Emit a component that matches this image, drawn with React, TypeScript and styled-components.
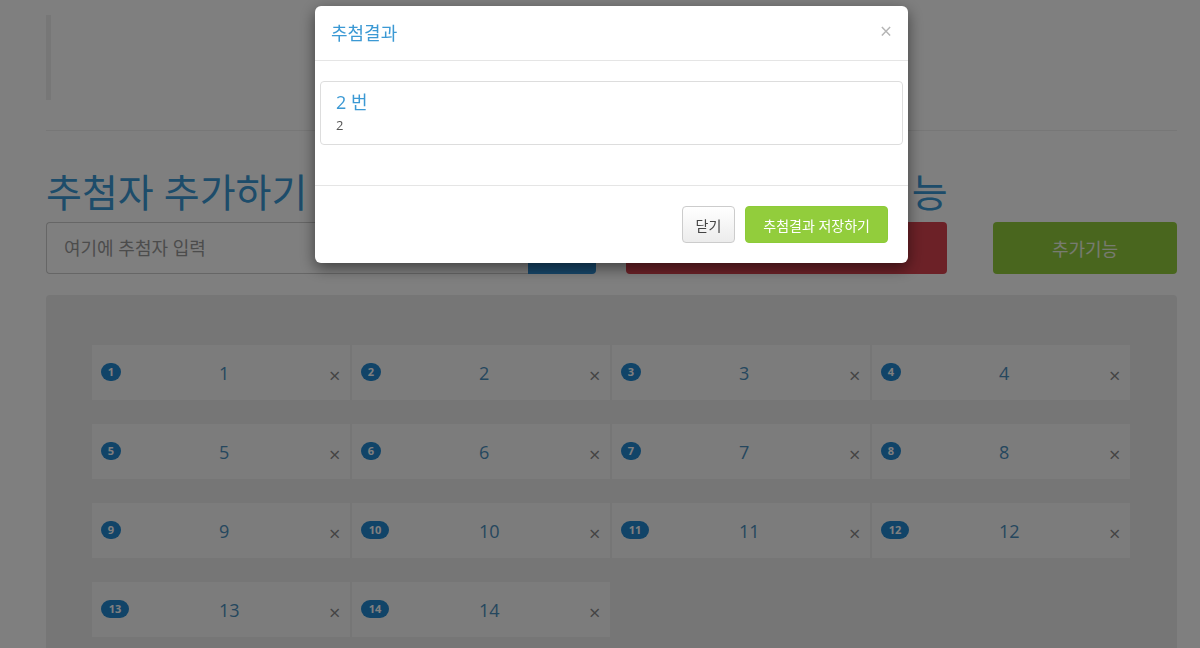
import * as React from 'react'
import styled, { createGlobalStyle } from 'styled-components'

const FONT = `"Open Sans", "Noto Sans CJK KR", sans-serif`

const GlobalStyle = createGlobalStyle`
	html, body {
		margin: 0;
		padding: 0;
		background: #fff;
		font-family: ${FONT};
		overflow: hidden;
	}
	* {
		box-sizing: border-box;
	}
`

const Page = styled.div`
	width: 1131px;
	margin-left: 46px;
	padding-top: 15px;
	height: 648px;
	overflow: hidden;
`

const Quote = styled.div`
	height: 85px;
	border-left: 5px solid #eee;
`

const Rule = styled.hr`
	margin: 30px 0 0;
	border: 0;
	border-top: 1px solid #eee;
`

const Controls = styled.div`
	display: grid;
	grid-template-columns: 550px 321px 200px;
	column-gap: 30px;
	margin-top: 36px;
	& > :nth-child(5) {
		margin-left: 16px;
	}
`

const Heading = styled.h1<{ $span?: number }>`
	margin: 0 0 5px;
	font-size: 39px;
	font-weight: 400;
	line-height: 50px;
	color: #3b99d4;
	white-space: nowrap;
	grid-column: span ${p => p.$span || 1};
`

const InputGroup = styled.div`
	display: flex;
	height: 52px;
`

const Input = styled.input`
	flex: 1;
	min-width: 0;
	border: 1px solid #ccc;
	border-right: 0;
	border-radius: 4px 0 0 4px;
	padding: 0 17px;
	font-family: ${FONT};
	font-size: 18px;
	color: #555;
	&::placeholder {
		color: #999;
	}
`

const Button = styled.button<{ $bg: string }>`
	border: 0;
	border-radius: 4px;
	background: ${p => p.$bg};
	color: #eef6e2;
	font-family: ${FONT};
	font-size: 18px;
	height: 52px;
`

const AttachedButton = styled(Button)`
	width: 68px;
	border-radius: 0 4px 4px 0;
`

const Well = styled.div`
	margin-top: 21px;
	background: #ececec;
	border-radius: 4px 4px 0 0;
	height: 360px;
	padding: 50px 46px 0;
`

const CardGrid = styled.div`
	display: grid;
	grid-template-columns: repeat(4, 258px);
	column-gap: 2px;
	row-gap: 24px;
`

const Card = styled.div`
	display: flex;
	align-items: center;
	height: 55px;
	padding-left: 9px;
	background: #f8f8f8;
`

const BadgeCell = styled.div`
	width: 118px;
	display: flex;
	align-items: center;
`

const Badge = styled.span<{ $wide: boolean }>`
	display: inline-flex;
	align-items: center;
	justify-content: center;
	height: 18px;
	min-width: ${p => (p.$wide ? 28 : 20)}px;
	padding: 0 5px;
	border-radius: 9px;
	background: #2288d0;
	color: #fff;
	font-size: 11px;
	font-weight: 700;
	margin-top: -2px;
`

const Name = styled.span`
	flex: 1;
	font-size: 18px;
	color: #4b8fbd;
`

const Remove = styled.span`
	width: 21px;
	text-align: left;
	font-size: 20px;
	color: #888;
	margin-top: 6px;
	line-height: 1;
`

const Backdrop = styled.div`
	position: fixed;
	inset: 0;
	background: rgba(0, 0, 0, 0.5);
`

const Modal = styled.div`
	position: fixed;
	top: 6px;
	left: 315px;
	width: 593px;
	background: #fff;
	border-radius: 6px;
	box-shadow: 0 5px 15px rgba(0, 0, 0, 0.5);
	overflow: hidden;
`

const ModalHeader = styled.div`
	display: flex;
	align-items: center;
	justify-content: space-between;
	height: 55px;
	padding: 0 16px;
	border-bottom: 1px solid #e5e5e5;
`

const ModalTitle = styled.h4`
	margin: 0 0 2px;
	font-size: 18px;
	font-weight: 400;
	color: #3b99d4;
`

const Close = styled.span`
	font-size: 21px;
	color: #b5b5b5;
	margin: 0 0 4px;
	line-height: 1;
`

const ModalBody = styled.div`
	padding: 20px 5px 40px;
	border-bottom: 1px solid #e5e5e5;
`

const ResultItem = styled.div`
	height: 64px;
	padding: 8px 15px 0;
	border: 1px solid #ddd;
	border-radius: 4px;
`

const ResultTitle = styled.div`
	font-size: 18px;
	line-height: 24px;
	color: #3b99d4;
`

const ResultText = styled.div`
	font-size: 13px;
	line-height: 20px;
	color: #555;
	margin-top: 1px;
`

const ModalFooter = styled.div`
	display: flex;
	justify-content: flex-end;
	gap: 10px;
	padding: 20px 20px 20px;
`

const FooterButton = styled.button<{ $primary?: boolean }>`
	height: 37px;
	padding: 0 ${p => (p.$primary ? 17 : 13)}px;
	border-radius: 4px;
	font-family: ${FONT};
	font-size: 14px;
	border: 1px solid ${p => (p.$primary ? '#8ccb38' : '#ccc')};
	color: ${p => (p.$primary ? '#fff' : '#444')};
	background: ${p =>
		p.$primary ? '#92cd3c' : 'linear-gradient(#fff, #ececec)'};
`

const entries = Array.from({ length: 14 }, (_, i) => String(i + 1))

export default function App() {
	return (
		<>
			<GlobalStyle />
			<Page>
				<Quote />
				<Rule />
				<Controls>
					<Heading>추첨자 추가하기</Heading>
					<Heading $span={2}>추첨하기 / 추가기능</Heading>
					<InputGroup>
						<Input placeholder='여기에 추첨자 입력' />
						<AttachedButton $bg='#2f8ed3'>추가</AttachedButton>
					</InputGroup>
					<Button $bg='#d9434f' />
					<Button $bg='#92cd3c'>추가기능</Button>
				</Controls>
				<Well>
					<CardGrid>
						{entries.map((name, i) => (
							<Card key={name}>
								<BadgeCell>
									<Badge $wide={i >= 9}>{i + 1}</Badge>
								</BadgeCell>
								<Name>{name}</Name>
								<Remove>×</Remove>
							</Card>
						))}
					</CardGrid>
				</Well>
			</Page>
			<Backdrop />
			<Modal>
				<ModalHeader>
					<ModalTitle>추첨결과</ModalTitle>
					<Close>×</Close>
				</ModalHeader>
				<ModalBody>
					<ResultItem>
						<ResultTitle>2 번</ResultTitle>
						<ResultText>2</ResultText>
					</ResultItem>
				</ModalBody>
				<ModalFooter>
					<FooterButton>닫기</FooterButton>
					<FooterButton $primary>추첨결과 저장하기</FooterButton>
				</ModalFooter>
			</Modal>
		</>
	)
}
